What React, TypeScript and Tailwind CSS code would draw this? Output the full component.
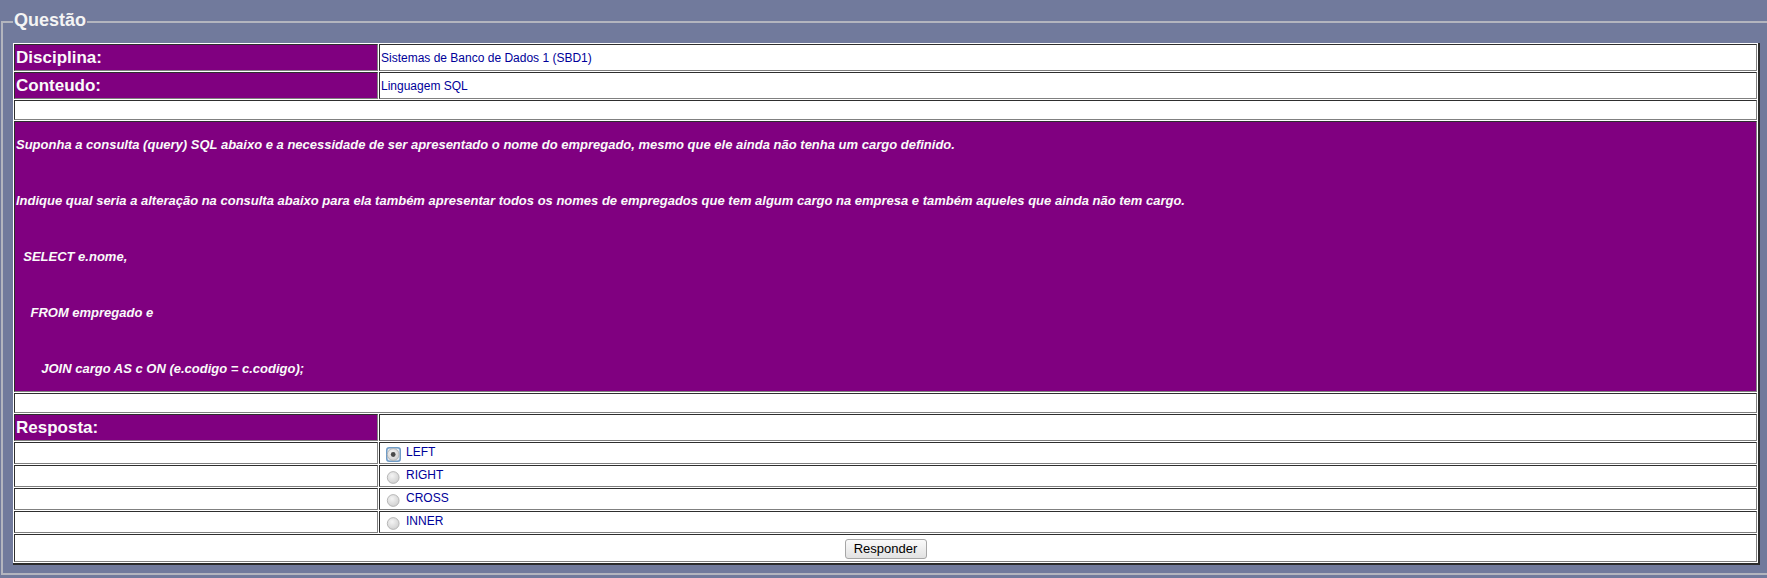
const cell =
  "border border-t-[#2e2e2e] border-l-[#2e2e2e] border-r-[#808080] border-b-[#808080] p-px";
const labelCell = `${cell} h-[27px] bg-[#800080] text-[17px] leading-[20px] font-bold text-[#fafafa]`;
const valueCell = `${cell} h-[27px] bg-white text-[12px] leading-[14px] text-[#000099]`;

const questionLines = [
  "Suponha a consulta (query) SQL abaixo e a necessidade de ser apresentado o nome do empregado, mesmo que ele ainda não tenha um cargo definido.",
  "Indique qual seria a alteração na consulta abaixo para ela também apresentar todos os nomes de empregados que tem algum cargo na empresa e também aqueles que ainda não tem cargo.",
  "  SELECT e.nome,",
  "    FROM empregado e",
  "       JOIN cargo AS c ON (e.codigo = c.codigo);",
];

const options = ["LEFT", "RIGHT", "CROSS", "INNER"];

function Radio({ checked, id }: { checked: boolean; id: string }) {
  return (
    <svg width="15" height="15" viewBox="0 0 15 15" className="ml-[5px] mt-[3px] shrink-0">
      <defs>
        <radialGradient id={id} cx="40%" cy="35%" r="70%">
          <stop offset="0%" stopColor="#f4f4f4" />
          <stop offset="100%" stopColor="#cfcfcf" />
        </radialGradient>
      </defs>
      {checked && (
        <rect x="0.75" y="0.75" width="13.5" height="13.5" rx="2.5" fill="#e4ebf2" stroke="#6f9cc6" strokeWidth="1.5" />
      )}
      <circle cx="7.2" cy="7.5" r="5.9" fill={`url(#${id})`} stroke="#ababab" strokeWidth="0.8" />
      {checked && <circle cx="7.2" cy="7.5" r="2.4" fill="#4a4a4a" />}
    </svg>
  );
}

export default function App() {
  return (
    <div className="h-[578px] overflow-hidden bg-[#717a9c] pt-[10px] font-['Liberation_Sans',Arial,sans-serif]">
      <fieldset className="ml-px w-[1771px] border-2 border-[#b3b5be] px-[10px] pt-[9px] pb-[8px]">
        <legend className="px-px pb-[3px] text-[18px] leading-[21px] font-bold text-[#f4f4f4]">
          Questão
        </legend>

        <table className="w-[1747px] table-fixed border-separate border-spacing-px bg-white border-r-2 border-b-2 border-[#2b2b2b]">
          <colgroup>
            <col className="w-[364px]" />
            <col />
          </colgroup>
          <tbody>
            <tr>
              <td className={labelCell}>Disciplina:</td>
              <td className={valueCell}>Sistemas de Banco de Dados 1 (SBD1)</td>
            </tr>
            <tr>
              <td className={labelCell}>Conteudo:</td>
              <td className={valueCell}>Linguagem SQL</td>
            </tr>
            <tr>
              <td colSpan={2} className={`${cell} h-[20px] bg-white`}></td>
            </tr>
            <tr>
              <td colSpan={2} className={`${cell} h-[271px] bg-[#800080]`}>
                <div className="flex flex-col gap-[41px] text-[13px] leading-[15px] font-bold italic text-[#fafafa]">
                  {questionLines.map((line) => (
                    <p key={line} className="whitespace-pre">
                      {line}
                    </p>
                  ))}
                </div>
              </td>
            </tr>
            <tr>
              <td colSpan={2} className={`${cell} h-[20px] bg-white`}></td>
            </tr>
            <tr>
              <td className={labelCell}>Resposta:</td>
              <td className={valueCell}></td>
            </tr>
            {options.map((opt, i) => (
              <tr key={opt}>
                <td className={`${cell} h-[22px] bg-white`}></td>
                <td className={`${cell} h-[22px] bg-white`}>
                  <div className="flex items-start">
                    <Radio checked={i === 0} id={`rg-${opt}`} />
                    <span className="ml-[5px] mt-px text-[12px] leading-[14px] text-[#000099]">{opt}</span>
                  </div>
                </td>
              </tr>
            ))}
            <tr>
              <td colSpan={2} className={`${cell} h-[27px] bg-white text-center`}>
                <button
                  type="button"
                  className="h-[20px] w-[82px] rounded-[3px] border border-[#a6a6a6] bg-gradient-to-b from-[#fafafa] to-[#e2e2e2] text-[13px] leading-[18px] text-black"
                >
                  Responder
                </button>
              </td>
            </tr>
          </tbody>
        </table>
      </fieldset>
    </div>
  );
}
